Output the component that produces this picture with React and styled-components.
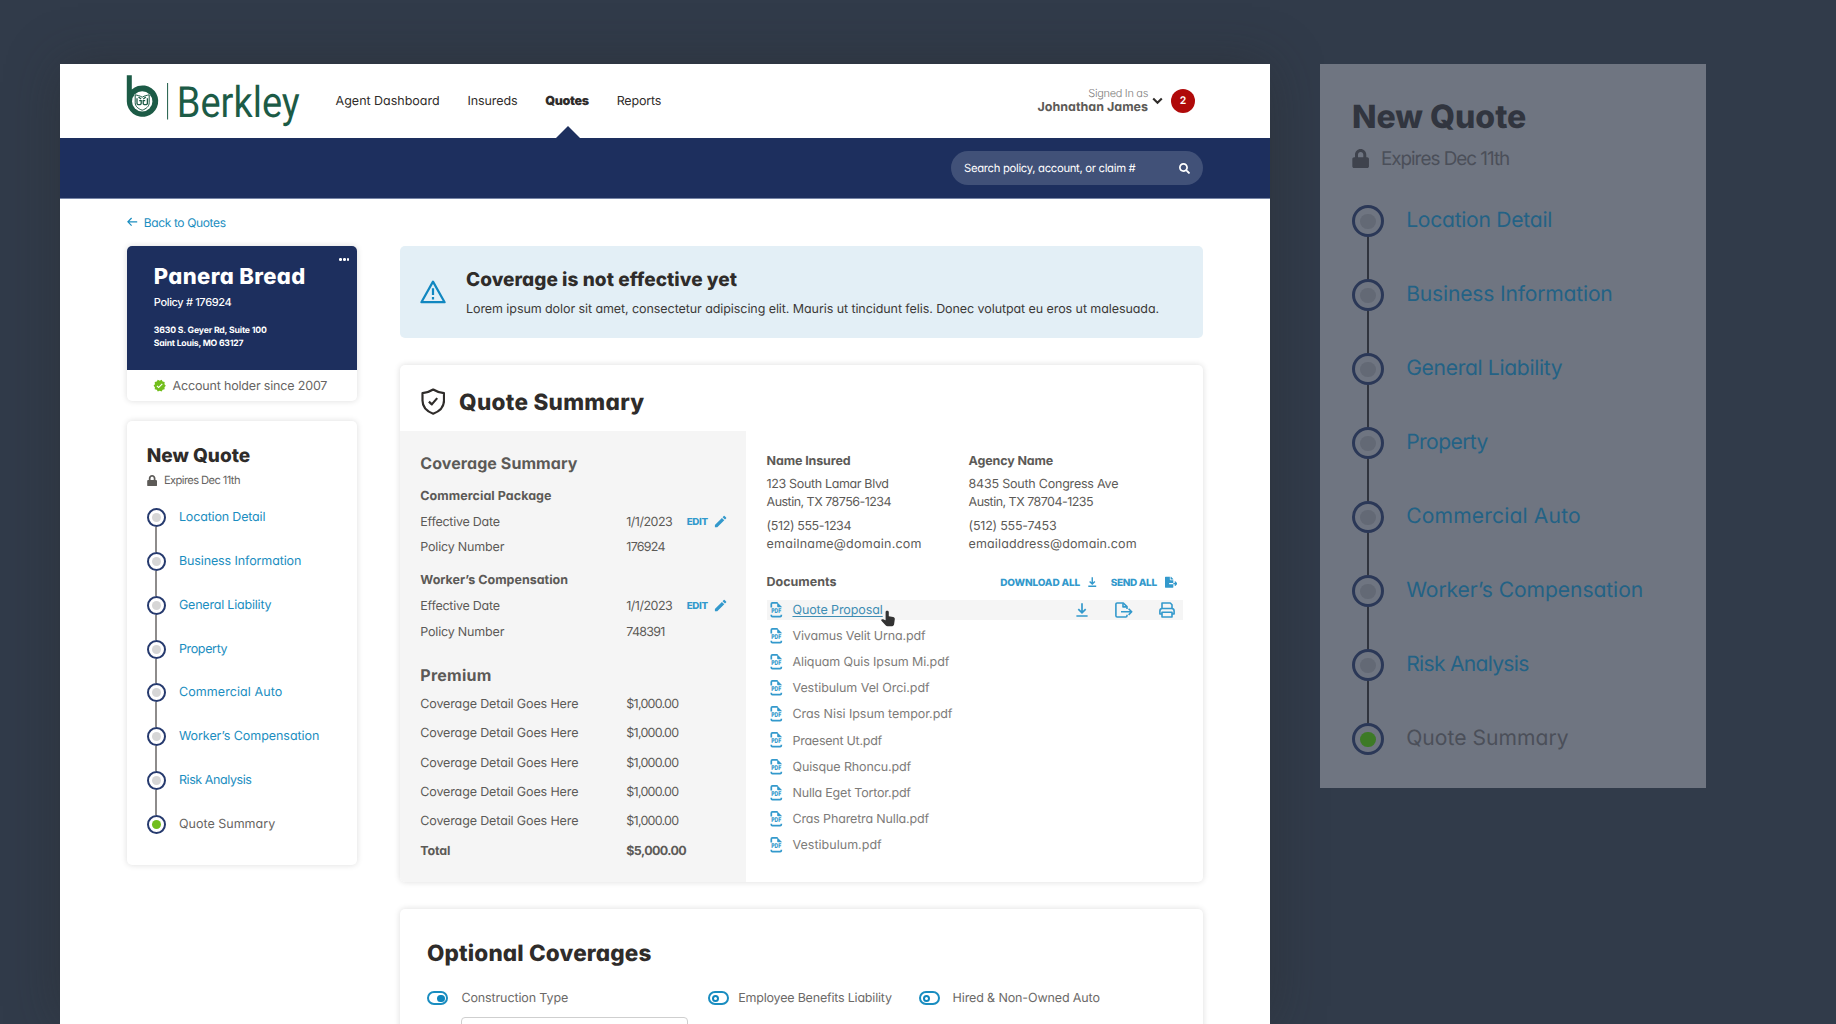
import React from 'react';
import styled, { createGlobalStyle, css, ThemeProvider } from 'styled-components';
import { FaFileExport, FaLock, FaSearch } from 'react-icons/fa';
import { MdEdit, MdVerified } from 'react-icons/md';

const colors = {
  navy: '#1d2f5e',
  link: '#1a8dc0',
  action: '#3399cc',
  ink: '#2f2c2a',
  text: '#5c5a57',
  soft: '#7d7b79',
  green: '#72be1c',
};

const lightSteps = {
  title: colors.ink,
  text: '#666462',
  link: colors.link,
  ring: '#263a6e',
  dot: '#d6d6d6',
  active: colors.green,
  line: '#8e8c8b',
  lock: '#5c5a57',
};

const mutedSteps = {
  title: '#31353f',
  text: '#4b4f59',
  link: '#236285',
  ring: '#2b3857',
  dot: '#636975',
  active: '#3d7a26',
  line: '#30343e',
  lock: '#3f434d',
};

const GlobalStyle = createGlobalStyle`
  *,
  *::before,
  *::after {
    box-sizing: border-box;
  }

  body {
    margin: 0;
    background: #313b4a;
    font-family: Inter, 'Noto Sans', sans-serif;
    font-feature-settings: 'cv11';
    text-rendering: geometricPrecision;
    overflow: hidden;
  }

  svg {
    display: block;
    flex: none;
  }
`;

/*
  $track is letter spacing in thousandths of an em,
  $drop is how far the label sits below the middle of its line
*/
const Text = styled.span`
  display: block;
  padding-top: ${(p) => p.$drop ?? 1.3}px;
  margin-bottom: -${(p) => p.$drop ?? 1.3}px;
  white-space: pre;
  font-size: ${(p) => p.$size || 12.5}px;
  font-weight: ${(p) => p.$weight || 400};
  letter-spacing: ${(p) => (p.$track || 0) / 1000}em;
  line-height: ${(p) => (p.$line ? `${p.$line}px` : 'inherit')};
  color: ${(p) => p.$color || 'inherit'};
`;

const Stage = styled.div`
  height: 1024px;
  display: flex;
  align-items: flex-start;
  gap: 50px;
  padding: 64px 0 0 60px;
  background: #313b4a;
  overflow: hidden;
`;

const Page = styled.main`
  width: 1210px;
  height: 960px;
  flex: none;
  background: #fff;
  box-shadow: 0 0 50px rgba(40, 40, 40, 0.4);
`;

const Header = styled.header`
  height: 74px;
  display: flex;
  align-items: center;
  padding-left: 66px;
  padding-right: 75px;
`;

const Nav = styled.nav`
  display: flex;
  gap: 27.8px;
  height: 100%;
  margin-left: 34.6px;
  color: ${colors.ink};
`;

const NavItem = styled.a`
  height: 100%;
  display: flex;
  flex-direction: column;
  align-items: center;
  justify-content: flex-end;
  line-height: 16px;

  ${Text} {
    margin-bottom: 28.5px;
  }

  ${(p) =>
    p.$active &&
    css`
      &::after {
        content: '';
        margin-left: 1px;
        border: 12.5px solid transparent;
        border-top: 0;
        border-bottom: 12.5px solid ${colors.navy};
      }

      ${Text} {
        margin-bottom: 16px;
      }
    `}
`;

const Account = styled.div`
  display: flex;
  align-items: center;
  margin-left: auto;
`;

const Signed = styled.div`
  display: flex;
  flex-direction: column;
  align-items: flex-end;
  margin-right: 4px;
`;

const Badge = styled.div`
  width: 24px;
  height: 24px;
  margin-left: 8px;
  border-radius: 50%;
  background: #b00a0a;
  color: #fff;
  font-size: 10.5px;
  font-weight: 600;
  line-height: 24px;
  text-align: center;
`;

const SearchBar = styled.div`
  height: 61px;
  display: flex;
  align-items: center;
  justify-content: flex-end;
  padding-right: 67px;
  background: ${colors.navy};
  border-bottom: 1px solid #7785a6;
`;

const Search = styled.div`
  width: 252px;
  height: 34px;
  display: flex;
  align-items: center;
  justify-content: space-between;
  padding: 0 13px;
  border-radius: 17px;
  background: #415178;
  color: #fff;
`;

const Body = styled.div`
  padding: 0 67px;
`;

const BackLink = styled.a`
  height: 46.6px;
  display: flex;
  align-items: center;
  gap: 6.2px;
  color: ${colors.link};
`;

const Columns = styled.div`
  display: flex;
  align-items: flex-start;
  gap: 42.6px;
`;

const Sidebar = styled.aside`
  width: 230.4px;
  flex: none;
  display: flex;
  flex-direction: column;
  gap: 20px;
`;

const Card = styled.section`
  border-radius: 5px;
  background: #fff;
  box-shadow: 0 0 6px rgba(0, 0, 0, 0.14);
  overflow: hidden;
`;

const Insured = styled.div`
  height: 124.6px;
  display: flex;
  padding: 16.6px 8px 0 26.8px;
  background: ${colors.navy};
  color: #fff;
`;

const Dots = styled.div`
  display: flex;
  gap: 1.1px;
  margin: -4.3px 0 0 auto;

  i {
    width: 2.7px;
    height: 2.7px;
    border-radius: 50%;
    background: #fff;
  }
`;

const Since = styled.div`
  height: 31px;
  display: flex;
  align-items: center;
  gap: 6px;
  padding-left: 26.2px;
  color: #666462;
`;

const StepsCard = styled(Card)`
  height: 443.8px;
  padding: 22.8px 20px 0 19.8px;
`;

const Overlay = styled.aside`
  width: 386px;
  height: 724px;
  flex: none;
  padding: 33px 32px 0;
  background: #6f7581;
`;

const Wizard = styled.div`
  font-size: ${(p) => p.$base}px;
  color: ${(p) => p.theme.text};
`;

const WizardTitle = styled.h2`
  margin: 0;
  font-size: 1.52em;
  font-weight: 800;
  line-height: 1.263;
  letter-spacing: -0.001em;
  color: ${(p) => p.theme.title};
`;

const Expires = styled.div`
  display: flex;
  align-items: center;
  gap: 0.55em;
  height: 1.28em;
  margin-top: 0.36em;

  svg {
    width: 0.82em;
    height: 0.9em;
    color: ${(p) => p.theme.lock};
  }

  span {
    font-size: 0.896em;
    letter-spacing: -0.054em;
  }
`;

const Steps = styled.ol`
  margin: 1.57em 0 0;
  padding: 0;
  list-style: none;
`;

const Step = styled.li`
  height: 3.508em;
  display: flex;
  gap: 1.06em;
  color: ${(p) => (p.$active ? p.theme.text : p.theme.link)};
`;

const Rail = styled.div`
  display: flex;
  flex-direction: column;
  align-items: center;

  &::after {
    content: '';
    flex: 1;
    width: 1.7px;
    background: ${(p) => (p.$last ? 'transparent' : p.theme.line)};
  }
`;

const Ring = styled.div`
  width: 1.51em;
  height: 1.51em;
  display: grid;
  place-items: center;
  border: 0.165em solid ${(p) => p.theme.ring};
  border-radius: 50%;

  &::before {
    content: '';
    width: 0.72em;
    height: 0.72em;
    border-radius: 50%;
    background: ${(p) => (p.$active ? p.theme.active : p.theme.dot)};
  }
`;

const StepLabel = styled.span`
  line-height: 1.54;
  white-space: nowrap;
  letter-spacing: ${(p) => p.$track / 1000}em;
`;

const Content = styled.div`
  width: 803px;
  flex: none;
`;

const Alert = styled.div`
  height: 92.6px;
  display: flex;
  align-items: center;
  gap: 20px;
  padding: 1px 0 0 20px;
  border-radius: 5px;
  background: #e3eff6;
`;

const SummaryCard = styled(Card)`
  height: 517.4px;
  margin-top: 26.7px;
`;

const SummaryHead = styled.div`
  height: 66.3px;
  display: flex;
  align-items: center;
  gap: 14px;
  padding: 7px 0 0 20.6px;
  color: ${colors.ink};
`;

const SummaryBody = styled.div`
  height: 451.1px;
  display: flex;
  color: ${colors.text};
`;

const Coverage = styled.div`
  width: 346px;
  flex: none;
  padding: 21.3px 0 0 20.3px;
  background: #f5f5f5;
`;

const Group = styled.div`
  margin-top: ${(p) => p.$top}px;
  line-height: 25.6px;
`;

const Pair = styled.div`
  height: ${(p) => p.$height || 25.6}px;
  display: grid;
  grid-template-columns: 206px 60.4px auto;
  align-items: center;
`;

const Edit = styled.a`
  display: flex;
  align-items: center;
  gap: 5.4px;
  color: ${colors.action};
`;

const Details = styled.div`
  flex: 1;
  padding: 20.2px 20.2px 0 20.6px;
`;

const Contacts = styled.div`
  display: grid;
  grid-template-columns: 202px 1fr;
`;

const ContactLines = styled.div`
  margin-top: ${(p) => p.$top}px;
  line-height: 17.8px;
`;

const DocsHead = styled.div`
  display: flex;
  align-items: center;
  margin-top: 20px;
  padding-right: 5.6px;
`;

const BulkAction = styled.a`
  display: flex;
  align-items: center;
  gap: 8px;
  margin-left: ${(p) => p.$left};
  color: ${colors.action};

  svg {
    margin-top: 1px;
  }
`;

const DocList = styled.div`
  display: flex;
  flex-direction: column;
  gap: 6.07px;
  margin-top: 9.4px;
`;

const Doc = styled.div`
  position: relative;
  height: 20px;
  display: flex;
  align-items: center;
  gap: 9.8px;
  padding: 0 8px 0 3.6px;
  color: ${(p) => (p.$hover ? '#3e8db3' : colors.soft)};
  background: ${(p) => (p.$hover ? '#f5f5f5' : 'transparent')};

  ${Text} {
    text-decoration: ${(p) => (p.$hover ? 'underline' : 'none')};
    text-decoration-thickness: 1px;
    text-underline-offset: 2px;
  }
`;

const DocActions = styled.div`
  display: flex;
  align-items: center;
  gap: 26.2px;
  margin-left: auto;
  color: ${colors.action};
`;

const Pointer = styled.svg`
  position: absolute;
  left: 114px;
  top: 10px;
`;

const OptionalCard = styled(Card)`
  height: 200px;
  margin-top: 27px;
  padding: 29px 27px 0;
  color: ${colors.ink};
`;

const Toggles = styled.div`
  display: grid;
  grid-template-columns: 281.2px 211px auto;
  margin-top: 22px;
`;

const ToggleRow = styled.label`
  height: 20px;
  display: flex;
  align-items: center;
  gap: ${(p) => p.$gap}px;
  color: #6b6967;
`;

const Toggle = styled.span`
  width: 21px;
  height: 14.4px;
  display: flex;
  align-items: center;
  justify-content: ${(p) => (p.$on ? 'flex-end' : 'flex-start')};
  padding: 0 1.4px;
  border: 2px solid ${colors.link};
  border-radius: 8px;

  &::before {
    content: '';
    width: 7.4px;
    height: 7.4px;
    border: 2px solid #0f86bd;
    border-radius: 50%;
    background: ${(p) => (p.$on ? '#0f86bd' : '#fff')};
  }
`;

const Select = styled.div`
  width: 227px;
  height: 40px;
  margin: 9px 0 0 34px;
  border: 1px solid #cfcfcf;
  border-radius: 4px;
`;

const Drawing = styled.svg`
  overflow: visible;
`;

function Logo() {
  return (
    <Drawing width="175" height="66" viewBox="0 -3 175 66" fill="none" stroke="#1c5b46">
      <path fill="#1c5b46" stroke="none" d="M.8 4.3h5v14.3A15.7 15.7 0 1 1 .8 30.4Z" />
      <circle cx="16.2" cy="30.4" r="10.2" fill="#fff" stroke="none" />
      <path strokeWidth="1" d="M9.2 23.8c2.2.6 4.6.8 7 2.4 2.4-1.6 4.8-1.8 7-2.4v8c0 3.6-3 6-7 7.4-4-1.4-7-3.8-7-7.4Z" />
      <path strokeWidth="1.3" d="M11 27.2v5c0 2 4.2 2 4.2 0v-2.5h-2M21.4 27.2v5c0 2-4.2 2-4.2 0v-2.5h2M12.5 26l2.6 2M19.9 26l-2.6 2" />
      <path strokeWidth="1" d="M41.6 12v36.5" />
      <text
        x="50.8"
        y="46.3"
        textLength="123"
        lengthAdjust="spacingAndGlyphs"
        fill="#1c5b46"
        stroke="none"
        fontFamily="Roboto, sans-serif"
        fontSize="43"
      >
        Berkley
      </text>
    </Drawing>
  );
}

function ArrowLeftIcon() {
  return (
    <svg width="10.5" height="10" viewBox="0 0 10.5 10" fill="none" stroke="currentColor" strokeWidth="1.2">
      <path d="M10.2 4.8H.9M4.6 1 .9 4.8l3.7 3.8" />
    </svg>
  );
}

function ChevronIcon() {
  return (
    <svg width="11" height="8" viewBox="0 0 11 8" fill="none" stroke={colors.ink} strokeWidth="2.1">
      <path d="m1.2 1.4 4.3 4.3 4.3-4.3" />
    </svg>
  );
}

function WarningIcon() {
  return (
    <svg width="26" height="24" viewBox="0 0 26 24" fill="none" stroke="#1187c0" strokeWidth="2.2" strokeLinejoin="round">
      <path d="M13 1.6 24.6 22.2H1.4Z" />
      <path d="M13 8.2v6.8M13 17v2.5" />
    </svg>
  );
}

function ShieldIcon() {
  return (
    <svg width="24.5" height="27" viewBox="0 0 24.5 27" fill="none" stroke={colors.ink} strokeWidth="2.2" strokeLinejoin="round">
      <path d="M12.2 1.5c3.3 2.1 6.7 3.2 10.8 3.7v7.3c0 6-3.8 10.7-10.8 13.2C5.3 23.2 1.5 18.5 1.5 12.5V5.2c4-.5 7.4-1.6 10.7-3.7Z" />
      <path d="m7.9 13.6 2.9 2.8 5.4-6.3" />
    </svg>
  );
}

function DownloadIcon({ width = 12, height = 14, weight = 1.7 }) {
  return (
    <svg width={width} height={height} viewBox="0 0 12 14" fill="none" stroke="currentColor" strokeWidth={weight}>
      <path d="M6 .3v9.4M2.3 6.2 6 9.9l3.7-3.7M.4 13h11.2" />
    </svg>
  );
}

function ExportIcon() {
  return (
    <svg width="18" height="16" viewBox="0 0 18 16" fill="none" stroke="currentColor" strokeWidth="1.6" strokeLinejoin="round">
      <path d="M12 7V4.6L8.3 1H2.1C1.4 1 .9 1.5.9 2.2v11.6c0 .7.5 1.2 1.2 1.2h8.7c.7 0 1.2-.5 1.2-1.2v-1.1" />
      <path d="M8 1.2v3.7h3.8M6 9.8h10.4M13.6 6.7l3.1 3.1-3.1 3.1" />
    </svg>
  );
}

function PrinterIcon() {
  return (
    <svg width="16" height="16" viewBox="0 0 16 16" fill="none" stroke="currentColor" strokeWidth="1.6" strokeLinejoin="round">
      <path d="M3 6.5V1h8.3L13 2.7v3.8" />
      <path d="M3 12H.9V9c0-1.4 1-2.5 2.5-2.5h9.2c1.5 0 2.5 1.1 2.5 2.5v3H13" />
      <path d="M3 10.3h10V15H3Z" />
    </svg>
  );
}

function PdfIcon() {
  return (
    <Drawing width="12.5" height="16" viewBox="0 0 12.5 16" fill="none" stroke={colors.action} strokeWidth="1.7">
      <path d="M1.3 5.4V2c0-.7.4-1.1 1.1-1.1h5.2M1.3 12.8v.8c0 .7.4 1.1 1.1 1.1h7.8c.7 0 1.1-.4 1.1-1.1v-.8" />
      <path fill={colors.action} stroke="none" d="M7.2.2 12.2 5.2H8.2c-.6 0-1-.4-1-1Z" />
      <text x="1.2" y="11.4" textLength="10" lengthAdjust="spacingAndGlyphs" fill={colors.action} stroke="none" fontSize="6.6" fontWeight="800">
        PDF
      </text>
    </Drawing>
  );
}

const nav = [
  { label: 'Agent Dashboard', track: -1 },
  { label: 'Insureds', track: -7 },
  { label: 'Quotes', track: -26, active: true },
  { label: 'Reports', track: -14 },
];

const steps = [
  ['Location Detail', -13],
  ['Business Information', -9],
  ['General Liability', -16],
  ['Property', -28],
  ['Commercial Auto', 7],
  ['Worker’s Compensation', -4],
  ['Risk Analysis', -34],
  ['Quote Summary', 1],
];

const policies = [
  { name: 'Commercial Package', track: 4, number: '176924' },
  { name: 'Worker’s Compensation', track: 0, number: '748391' },
];

const premiums = ['$1,000.00', '$1,000.00', '$1,000.00', '$1,000.00', '$1,000.00'];

const contacts = [
  {
    title: ['Name Insured', -10],
    address: [['123 South Lamar Blvd', -28], ['Austin, TX 78756-1234', -42]],
    reach: [['(512) 555-1234', -31], ['emailname@domain.com', 18]],
  },
  {
    title: ['Agency Name', -11],
    address: [['8435 South Congress Ave', -17], ['Austin, TX 78704-1235', -42]],
    reach: [['(512) 555-7453', -18], ['emailaddress@domain.com', 10]],
  },
];

const documents = [
  ['Quote Proposal', -8],
  ['Vivamus Velit Urna.pdf', -12],
  ['Aliquam Quis Ipsum Mi.pdf', -8],
  ['Vestibulum Vel Orci.pdf', -5],
  ['Cras Nisi Ipsum tempor.pdf', -4],
  ['Praesent Ut.pdf', -20],
  ['Quisque Rhoncu.pdf', -10],
  ['Nulla Eget Tortor.pdf', -16],
  ['Cras Pharetra Nulla.pdf', -12],
  ['Vestibulum.pdf', 2],
];

function Lines({ items, top }) {
  return (
    <ContactLines $top={top}>
      {items.map(([text, track]) => (
        <Text key={text} $track={track}>{text}</Text>
      ))}
    </ContactLines>
  );
}

function QuoteSteps({ base }) {
  return (
    <Wizard $base={base}>
      <WizardTitle>New Quote</WizardTitle>
      <Expires>
        <FaLock />
        <span>Expires Dec 11th</span>
      </Expires>
      <Steps>
        {steps.map(([label, track], i) => {
          const last = i === steps.length - 1;
          return (
            <Step key={label} $active={last}>
              <Rail $last={last}>
                <Ring $active={last} />
              </Rail>
              <StepLabel $track={track}>{label}</StepLabel>
            </Step>
          );
        })}
      </Steps>
    </Wizard>
  );
}

function PolicyGroup({ name, track, number, top }) {
  return (
    <Group $top={top}>
      <Text $weight={700} $track={track}>{name}</Text>
      <Pair>
        <Text $track={-20}>Effective Date</Text>
        <Text $track={-40}>1/1/2023</Text>
        <Edit>
          <Text $size={9.8} $weight={800} $track={-38}>EDIT</Text>
          <MdEdit size={15.2} />
        </Edit>
      </Pair>
      <Pair>
        <Text $track={-15}>Policy Number</Text>
        <Text $track={-58}>{number}</Text>
      </Pair>
    </Group>
  );
}

function DocumentRow({ name, track, hover }) {
  return (
    <Doc $hover={hover}>
      <PdfIcon />
      <Text $drop={0.6} $track={track}>{name}</Text>
      {hover && (
        <>
          <DocActions>
            <DownloadIcon />
            <ExportIcon />
            <PrinterIcon />
          </DocActions>
          <Pointer width="14" height="17" viewBox="0 0 14 17" fill="#333">
            <path d="M4.6 1.9C4.6.2 7.7.2 7.8 1.9V6.2l4.3.8c1.2.2 1.9 1.1 1.7 2.3l-.7 5c-.2 1.1-.9 1.9-2 1.9H6.5c-.7 0-1.3-.3-1.7-.8L.4 10.8c-.5-.8 0-1.5.9-1.6.8 0 2.2.5 3.3 1Z" />
          </Pointer>
        </>
      )}
    </Doc>
  );
}

export default function App() {
  return (
    <>
      <GlobalStyle />
      <Stage>
        <Page>
          <Header>
            <Logo />
            <Nav>
              {nav.map(({ label, track, active }) => (
                <NavItem key={label} $active={active}>
                  <Text $drop={0} $weight={active ? 900 : 400} $track={track}>{label}</Text>
                </NavItem>
              ))}
            </Nav>
            <Account>
              <Signed>
                <Text $drop={0} $size={11} $weight={300} $track={-29} $line={14} $color="#807e7c">Signed In as</Text>
                <Text $drop={0} $weight={700} $track={0} $line={16.5} $color={colors.text}>Johnathan James</Text>
              </Signed>
              <ChevronIcon />
              <Badge>2</Badge>
            </Account>
          </Header>
          <SearchBar>
            <Search>
              <Text $drop={0} $size={11.3} $track={-28}>Search policy, account, or claim #</Text>
              <FaSearch size={11} />
            </Search>
          </SearchBar>
          <Body>
            <BackLink>
              <ArrowLeftIcon />
              <Text $drop={0} $size={12} $track={-30}>Back to Quotes</Text>
            </BackLink>
            <Columns>
              <Sidebar>
                <Card>
                  <Insured>
                    <div>
                      <Text $size={22} $weight={800} $track={17} $line={28}>Panera Bread</Text>
                      <Group $top={4.3}>
                        <Text $drop={0.6} $size={11} $weight={500} $track={-32} $line={14}>Policy # 176924</Text>
                      </Group>
                      <Group $top={15.2}>
                        <Text $size={8.7} $weight={700} $track={-20} $line={12.7}>3630 S. Geyer Rd, Suite 100</Text>
                        <Text $size={8.7} $weight={700} $track={-25} $line={12.7}>Saint Louis, MO 63127</Text>
                      </Group>
                    </div>
                    <Dots>
                      <i />
                      <i />
                      <i />
                    </Dots>
                  </Insured>
                  <Since>
                    <MdVerified size={13.4} color={colors.green} />
                    <Text $drop={0.8} $track={-14}>Account holder since 2007</Text>
                  </Since>
                </Card>
                <ThemeProvider theme={lightSteps}>
                  <StepsCard>
                    <QuoteSteps base={12.5} />
                  </StepsCard>
                </ThemeProvider>
              </Sidebar>
              <Content>
                <Alert>
                  <WarningIcon />
                  <div>
                    <Text $size={19} $weight={800} $track={3} $line={24} $color={colors.ink}>Coverage is not effective yet</Text>
                    <Group $top={9}>
                      <Text $track={-6} $line={18} $color="#3b3937">
                        Lorem ipsum dolor sit amet, consectetur adipiscing elit. Mauris ut tincidunt felis. Donec volutpat eu eros ut malesuada.
                      </Text>
                    </Group>
                  </div>
                </Alert>
                <SummaryCard>
                  <SummaryHead>
                    <ShieldIcon />
                    <Text $size={22.5} $weight={800} $track={13}>Quote Summary</Text>
                  </SummaryHead>
                  <SummaryBody>
                    <Coverage>
                      <Text $drop={0.8} $size={16} $weight={700} $track={5} $line={20}>Coverage Summary</Text>
                      {policies.map((policy, i) => (
                        <PolicyGroup key={policy.name} {...policy} top={i ? 7.3 : 10.5} />
                      ))}
                      <Group $top={20.5}>
                        <Text $drop={0.6} $size={16} $weight={700} $track={16} $line={20}>Premium</Text>
                      </Group>
                      <Group $top={4.4}>
                        {premiums.map((amount, i) => (
                          <Pair key={i} $height={29.4}>
                            <Text $track={-10}>Coverage Detail Goes Here</Text>
                            <Text $track={-60}>{amount}</Text>
                          </Pair>
                        ))}
                        <Pair $height={29.4}>
                          <Text $weight={700} $track={-15}>Total</Text>
                          <Text $weight={700} $track={-49}>$5,000.00</Text>
                        </Pair>
                      </Group>
                    </Coverage>
                    <Details>
                      <Contacts>
                        {contacts.map(({ title, address, reach }) => (
                          <div key={title[0]}>
                            <Text $weight={700} $track={title[1]} $line={18}>{title[0]}</Text>
                            <Lines items={address} top={5.8} />
                            <Lines items={reach} top={6.4} />
                          </div>
                        ))}
                      </Contacts>
                      <DocsHead>
                        <Text $weight={700} $track={-1} $line={18}>Documents</Text>
                        <BulkAction $left="auto">
                          <Text $size={10} $weight={800} $track={-14}>DOWNLOAD ALL</Text>
                          <DownloadIcon width={8.5} height={9.9} weight={2} />
                        </BulkAction>
                        <BulkAction $left="14px">
                          <Text $size={10} $weight={800} $track={-34}>SEND ALL</Text>
                          <FaFileExport size={12.5} />
                        </BulkAction>
                      </DocsHead>
                      <DocList>
                        {documents.map(([name, track], i) => (
                          <DocumentRow key={name} name={name} track={track} hover={i === 0} />
                        ))}
                      </DocList>
                    </Details>
                  </SummaryBody>
                </SummaryCard>
                <OptionalCard>
                  <Text $size={22.5} $weight={800} $track={7} $line={28}>Optional Coverages</Text>
                  <Toggles>
                    <ToggleRow $gap={13.4}>
                      <Toggle $on />
                      <Text $drop={0} $track={-9}>Construction Type</Text>
                    </ToggleRow>
                    <ToggleRow $gap={9}>
                      <Toggle />
                      <Text $drop={0} $track={-16}>Employee Benefits Liability</Text>
                    </ToggleRow>
                    <ToggleRow $gap={12.4}>
                      <Toggle />
                      <Text $drop={0} $track={-10}>Hired & Non-Owned Auto</Text>
                    </ToggleRow>
                  </Toggles>
                  <Select />
                </OptionalCard>
              </Content>
            </Columns>
          </Body>
        </Page>
        <ThemeProvider theme={mutedSteps}>
          <Overlay>
            <QuoteSteps base={21.1} />
          </Overlay>
        </ThemeProvider>
      </Stage>
    </>
  );
}
